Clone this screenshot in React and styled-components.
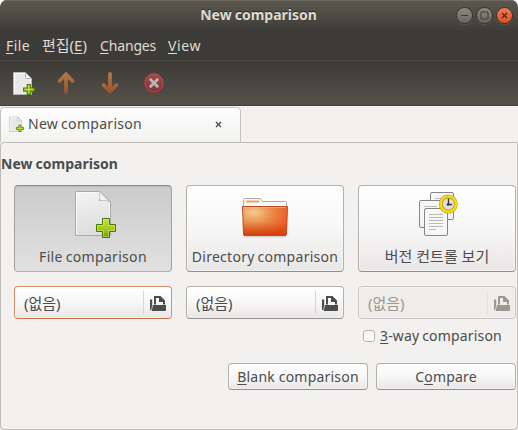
import React from "react";
import styled, { createGlobalStyle } from "styled-components";

const Global = createGlobalStyle`
  * { box-sizing: border-box; }
  body { margin: 0; background: #fff; }
`;

const Window = styled.div`
  width: 518px;
  height: 430px;
  display: flex;
  flex-direction: column;
  overflow: hidden;
  border-radius: 7px 7px 0 0;
  background: #f2f1f0;
  color: #4c4c4c;
  font: 14px/20px "Noto Sans", "Noto Sans CJK KR", sans-serif;
  white-space: nowrap;
`;

const Label = styled.span`
  font-size: ${(p) => p.$size || 14}px;
  letter-spacing: ${(p) => p.$track || 0}px;
  word-spacing: ${(p) => p.$gap || 0}px;
`;

const Mnemonic = styled.span`
  text-decoration: underline;
  text-decoration-thickness: 1px;
  text-underline-offset: 2px;
`;

const TitleBar = styled.header`
  height: 30px;
  flex: none;
  display: grid;
  grid-template-columns: 1fr auto 1fr;
  align-items: center;
  padding-right: 5px;
  padding-left: 4px;
  background: linear-gradient(#5b5850, #55524a 25%, #3f3d38);
  box-shadow: inset 0 1px #6b675e;
  color: #dfdbd2;
  font-weight: 700;
  text-shadow: 0 -1px #2b2a26;
`;

const WindowControls = styled.div`
  grid-column: 3;
  justify-self: end;
  display: flex;
  gap: 3px;
`;

const ControlButton = styled.button`
  width: 17px;
  height: 17px;
  padding: 0;
  display: grid;
  place-items: center;
  border: 1px solid #35342f;
  border-radius: 50%;
  background: ${(p) => (p.$close ? "linear-gradient(#f37b55, #e3501f)" : "linear-gradient(#8c8a83, #68665f)")};
  box-shadow: 0 1px #5b5951;
  svg { display: block; }
`;

const TitleText = styled.h1`
  grid-column: 2;
  margin: 0;
  font-size: 14px;
`;

const MenuBar = styled.nav`
  height: 31px;
  flex: none;
  display: flex;
  align-items: center;
  padding: 1px 6px 0;
  background: #3c3b37;
  border-bottom: 1px solid #45443f;
  color: #dfdbd2;
`;

const MenuItem = styled.div`
  width: ${(p) => p.$width}px;
`;

const ToolBar = styled.div`
  height: 45px;
  flex: none;
  display: flex;
  align-items: center;
  gap: 20px;
  padding: 0 11px;
  background: linear-gradient(#3c3b37, #55524a);
  border-bottom: 1px solid #403d3b;
`;

const ToolButton = styled.button`
  width: 24px;
  height: 26px;
  padding: 0;
  border: 0;
  background: none;
  svg { display: block; }
`;

const TabStrip = styled.div`
  height: 36px;
  flex: none;
  display: flex;
`;

const Tab = styled.div`
  width: 241px;
  margin-top: 1px;
  display: flex;
  align-items: center;
  padding: 0 17px 2px 7px;
  border: 1px solid #c4c2bf;
  border-bottom: 0;
  border-radius: 5px 5px 0 0;
  background: linear-gradient(#fff, #f2f1f0);
  svg { display: block; }
`;

const TabTitle = styled.div`
  flex: 1;
  padding-left: 4px;
`;

const Page = styled.main`
  height: 288px;
  flex: none;
  display: flex;
  flex-direction: column;
  border: 1px solid #bfbdb9;
  border-radius: 4px 1px 4px 4px;
`;

const Heading = styled.h2`
  margin: 11px 0 0;
  height: 31px;
  font-size: 14px;
  line-height: 20px;
`;

const Columns = styled.section`
  display: grid;
  grid-template-columns: repeat(3, 158px);
  column-gap: 14px;
  padding-left: 13px;
`;

const Button = styled.button`
  padding: 0;
  border: 1px solid #b3b1ad;
  border-bottom-color: #92908d;
  border-radius: 4px;
  background: linear-gradient(#fff, #f9f8f8 45%, #e9e7e6);
  box-shadow: inset 0 0 0 1px rgba(255, 255, 255, 0.35);
  color: #4c4c4c;
  font: inherit;
`;

const ModeButton = styled(Button)`
  height: 87px;
  display: flex;
  flex-direction: column;
  align-items: center;
  svg { display: block; flex: none; margin: 4px 0 ${(p) => (p.$raised ? 6 : 7)}px; }
  ${(p) =>
    p.$active &&
    `
    background: linear-gradient(#cbcbcb, #e2e1e1);
    border-color: #898989 #a3a3a3 #b0b0b0;
    box-shadow: inset 0 1px 1px rgba(0, 0, 0, 0.09);
  `}
`;

const Chooser = styled(Button)`
  height: 33px;
  margin-top: 14px;
  display: flex;
  align-items: center;
  padding: 2px 5px 0 9px;
  text-align: left;
  ${(p) => p.$focused && "border-color: #dc8c6e; border-bottom-color: #d06d49;"}
  ${(p) => p.$disabled && "background: #eeedec; border-color: #c8c6c4; color: #9c9890;"}
`;

const ChooserValue = styled.div`
  flex: 1;
`;

const ChooserIcon = styled.div`
  height: 23px;
  margin-top: -2px;
  padding: 5px 0 0 6px;
  border-left: 1px solid ${(p) => (p.$disabled ? "#e2e0de" : "#d8d6d4")};
  svg { display: block; }
`;

const CheckRow = styled.label`
  height: 20px;
  margin-top: 7px;
  display: flex;
  align-items: center;
  gap: 5px;
  padding-left: 362px;
`;

const CheckBox = styled.span`
  width: 12px;
  height: 12px;
  border: 1px solid #b6b4b1;
  border-radius: 3px;
  background: linear-gradient(#f5f4f4, #fff);
`;

const Actions = styled.footer`
  display: flex;
  justify-content: flex-end;
  gap: 8px;
  margin-top: 17px;
  padding-right: 1px;
`;

const ActionButton = styled(Button)`
  width: 140px;
  height: 27px;
  padding-top: 1px;
`;

function NewFileLarge() {
  return (
    <svg width="48" height="50" viewBox="0 0 48 50">
      <defs>
        <linearGradient id="paper" x2="0.2" y2="1">
          <stop stopColor="#f4f4f4" />
          <stop offset="1" stopColor="#dedede" />
        </linearGradient>
        <linearGradient id="plus" x2="0" y2="1">
          <stop stopColor="#c9de45" />
          <stop offset=".55" stopColor="#a5ca20" />
          <stop offset="1" stopColor="#639d08" />
        </linearGradient>
        <linearGradient id="curl" gradientUnits="userSpaceOnUse" x1="29.500" y1="12" x2="36" y2="5.500">
          <stop stopColor="#8e8e8e" />
          <stop offset=".5" stopColor="#fff" />
          <stop offset="1" stopColor="#dcdcdc" />
        </linearGradient>
      </defs>
      <path d="M6.500 1.500H31L41.500 12V45.500H6.500Z" fill="url(#paper)" stroke="#aaa" />
      <path d="M7.500 44.500V2.500H30.500M40.500 12.500V44.500" fill="none" stroke="#fff" opacity=".65" />
      <path d="M30.500 2C31 4 31 8 30.500 10.800C34 10 38 10.300 41.200 12L31.500 2Z" fill="url(#curl)" stroke="#aaa" strokeWidth=".6" />
      <path d="M33.500 28.500H40.500V34.500H46.500V41.500H40.500V47.500H33.500V41.500H27.500V34.500H33.500Z" fill="url(#plus)" stroke="#4b7800" />
      <path d="M34.500 46.500V40.500H28.500V35.500H34.500V29.500H39.500V35.500H45.500V40.500H39.500V46.500Z" fill="none" stroke="#e1ef82" opacity=".5" />
    </svg>
  );
}

function NewFileSmall({ size }) {
  return (
    <svg width={size} height={size} viewBox="0 0 24 24">
      <path d="M2.500 1.500H14.500L20.500 7.500V23.500H2.500Z" fill="#e9e9e9" stroke="#b4b4b4" />
      <path d="M3.500 22.500V2.500H14M19.500 8V22" fill="none" stroke="#fff" />
      <path d="M14.500 1.800V7.500H20.300Z" fill="#fafafa" stroke="#aaa" strokeWidth=".9" />
      <path d="M16.300 13.500H19.300V17H23.200V20.200H19.300V23.400H16.300V20.200H12.600V17H16.300Z" fill="#bbda3c" stroke="#4f7d04" strokeWidth="1.200" />
    </svg>
  );
}

function ArrowIcon({ down }) {
  return (
    <svg width="24" height="26" viewBox="0 0 24 26">
      <defs>
        <linearGradient id={down ? "arrowDown" : "arrowUp"} gradientUnits="userSpaceOnUse" x1="0" y1="2" x2="0" y2="24">
          <stop stopColor="#b07a4d" />
          <stop offset="1" stopColor="#9f502b" />
        </linearGradient>
      </defs>
      <path
        d={down ? "M11 4V21M4.500 15L11 21.500L17.500 15" : "M11 22V5M4.500 11L11 4.500L17.500 11"}
        fill="none"
        stroke={`url(#${down ? "arrowDown" : "arrowUp"})`}
        strokeWidth="3.800"
        strokeLinecap="round"
      />
    </svg>
  );
}

function StopIcon() {
  return (
    <svg width="24" height="26" viewBox="0 0 24 26">
      <defs>
        <linearGradient id="stop" x2="0" y2="1">
          <stop stopColor="#9c4d49" />
          <stop offset="1" stopColor="#813039" />
        </linearGradient>
      </defs>
      <circle cx="11" cy="13" r="10" fill="url(#stop)" stroke="#852f31" />
      <circle cx="11" cy="13" r="9" fill="none" stroke="#a8605b" strokeWidth=".7" />
      <path d="M6.800 8.800L15.200 17.200M15.200 8.800L6.800 17.200" stroke="#bcb6b1" strokeWidth="2.800" />
    </svg>
  );
}

function FolderLarge() {
  return (
    <svg width="48" height="50" viewBox="0 0 48 50">
      <defs>
        <radialGradient id="folder" cx=".25" cy=".2" r=".85">
          <stop stopColor="#f5cb91" />
          <stop offset=".48" stopColor="#e98b46" />
          <stop offset="1" stopColor="#ed551e" />
        </radialGradient>
        <linearGradient id="folderShade" x2="0" y2="1">
          <stop offset=".35" stopColor="#c54213" stopOpacity="0" />
          <stop offset="1" stopColor="#c83709" stopOpacity=".7" />
        </linearGradient>
      </defs>
      <path d="M3 46.500H45" stroke="#000" strokeWidth="2" opacity=".12" />
      <path d="M2.500 17V9.500Q2.500 8.500 3.500 8.500H18Q20 8.500 21.500 11.500H44.500Q45.500 11.500 45.500 12.500V17Z" fill="#f8f8f8" stroke="#aaa" />
      <path d="M5 11.500H18" stroke="#f0a070" strokeWidth="2" />
      <path d="M1.500 16.500H46.500L45.500 44Q45.500 45.500 44 45.500H4Q2.500 45.500 2.500 44Z" fill="url(#folder)" />
      <path d="M2 33Q24 32 46 26L45 45H3Z" fill="url(#folderShade)" />
      <path d="M1.500 16.500H46.500L45.500 44Q45.500 45.500 44 45.500H4Q2.500 45.500 2.500 44Z" fill="none" stroke="#bd4b20" />
      <path d="M3 17.500H45" stroke="#f7bb91" opacity=".65" />
    </svg>
  );
}

function VersionsLarge() {
  return (
    <svg width="48" height="50" viewBox="0 0 48 50">
      <g fill="#f7f7f7" stroke="#858585">
        <rect x="17.500" y="2.500" width="23" height="27" rx="1.500" />
        <rect x="6.500" y="10.500" width="23" height="27" rx="1.500" />
        <rect x="11.500" y="18.500" width="23" height="27" rx="1.500" />
      </g>
      <path d="M22 8.500H30M11 16.500H24" stroke="#bbb" />
      <path d="M16 24.500H30M16 27.500H30M16 30.500H30M16 33.500H30M16 36.500H30M16 39.500H23" stroke="#bababa" />
      <circle cx="35.300" cy="14" r="7.500" fill="#dfdfdf" stroke="#c6aa00" strokeWidth="4" />
      <circle cx="35.300" cy="14" r="7.700" fill="none" stroke="#f5dc26" strokeWidth="2.300" />
      <path d="M35.500 8.500V14.500H39" fill="none" stroke="#333" strokeWidth="1.300" />
      <circle cx="35" cy="14.500" r="1.300" fill="#333" />
    </svg>
  );
}

function OpenIcon() {
  return (
    <svg width="16" height="16" viewBox="0 0 16 16">
      <path d="M0 3.500H2.200V9.500L1.200 14H0Z" fill="currentColor" />
      <path d="M4 0H10.500L15 4.500V8.500H13V6H9V2H6V8.500H4Z" fill="currentColor" />
      <path d="M3 9H16V14Q16 15 15 15H1.600Z" fill="currentColor" />
    </svg>
  );
}

function FileChooser({ focused, disabled }) {
  return (
    <Chooser $focused={focused} $disabled={disabled} disabled={disabled}>
      <ChooserValue>
        <Label $size={15}>(없음)</Label>
      </ChooserValue>
      <ChooserIcon $disabled={disabled}>
        <OpenIcon />
      </ChooserIcon>
    </Chooser>
  );
}

export default function App() {
  return (
    <>
      <Global />
      <Window>
        <TitleBar>
          <TitleText><Label $track={-0.02} $gap={-0.5}>New comparison</Label></TitleText>
          <WindowControls>
            <ControlButton>
              <svg width="15" height="15"><path d="M4 7.500H11" stroke="#3c3b37" /></svg>
            </ControlButton>
            <ControlButton>
              <svg width="15" height="15"><path d="M4 4H11V11H4Z" fill="none" stroke="#3c3b37" /></svg>
            </ControlButton>
            <ControlButton $close>
              <svg width="15" height="15"><path d="M5 5L10 10M10 5L5 10" stroke="#4a2a1c" strokeWidth="1.300" /></svg>
            </ControlButton>
          </WindowControls>
        </TitleBar>
        <MenuBar>
          <MenuItem $width={36}><Label $track={0.4}><Mnemonic>F</Mnemonic>ile</Label></MenuItem>
          <MenuItem $width={58}><Label $size={15}>편집(<Mnemonic>E</Mnemonic>)</Label></MenuItem>
          <MenuItem $width={68}><Label $track={-0.15}><Mnemonic>C</Mnemonic>hanges</Label></MenuItem>
          <MenuItem $width={40}><Label $track={0.6}><Mnemonic>V</Mnemonic>iew</Label></MenuItem>
        </MenuBar>
        <ToolBar>
          <ToolButton><NewFileSmall size={24} /></ToolButton>
          <ToolButton><ArrowIcon /></ToolButton>
          <ToolButton><ArrowIcon down /></ToolButton>
          <ToolButton><StopIcon /></ToolButton>
        </ToolBar>
        <TabStrip>
          <Tab>
            <NewFileSmall size={16} />
            <TabTitle><Label $track={0.3} $gap={-1}>New comparison</Label></TabTitle>
            <svg width="9" height="9"><path d="M2 2L7 7M7 2L2 7" stroke="#4c4c4c" strokeWidth="1.300" /></svg>
          </Tab>
        </TabStrip>
        <Page>
          <Heading><Label $gap={-0.5}>New comparison</Label></Heading>
          <Columns>
            <ModeButton $active>
              <NewFileLarge />
              <Label $track={0.32} $gap={-1}>File comparison</Label>
            </ModeButton>
            <ModeButton>
              <FolderLarge />
              <Label $track={0.27} $gap={-1}>Directory comparison</Label>
            </ModeButton>
            <ModeButton $raised>
              <VersionsLarge />
              <Label $size={15}>버전 컨트롤 보기</Label>
            </ModeButton>
            <FileChooser focused />
            <FileChooser />
            <FileChooser disabled />
          </Columns>
          <CheckRow>
            <CheckBox />
            <Label $track={0.17} $gap={-1}><Mnemonic>3</Mnemonic>-way comparison</Label>
          </CheckRow>
          <Actions>
            <ActionButton><Label $track={0.2}><Mnemonic>B</Mnemonic>lank comparison</Label></ActionButton>
            <ActionButton><Label $track={0.2}>C<Mnemonic>o</Mnemonic>mpare</Label></ActionButton>
          </Actions>
        </Page>
      </Window>
    </>
  );
}
